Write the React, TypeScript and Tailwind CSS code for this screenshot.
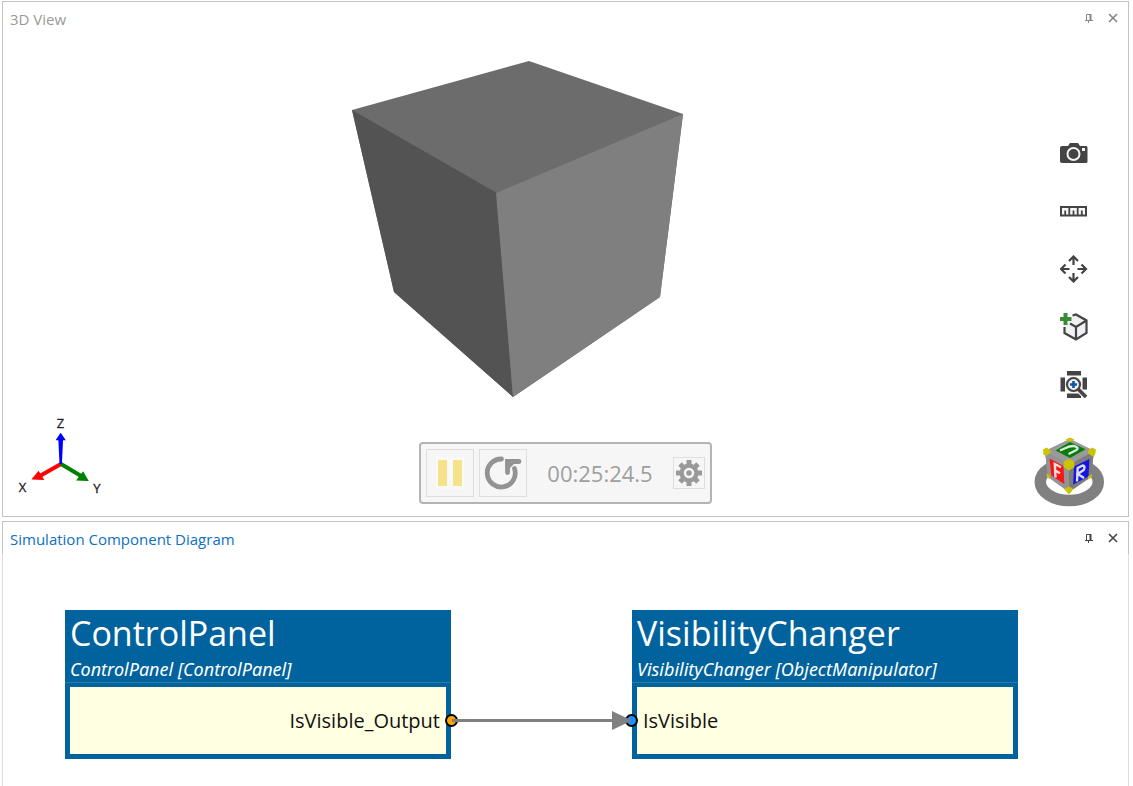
import React from 'react';

const tools = [
  {
    label: 'Take screenshot',
    icon: (
      <svg viewBox="0 0 28 28" className="h-7 w-7">
        <path d="M2 7h6l2-3h8l2 3h6q1.500 0 1.500 1.500v14q0 1.500-1.500 1.500h-24q-2 0-2-2v-13q0-2 2-2z" fill="#444444" />
        <circle cx="13.500" cy="15" r="6" fill="#444444" stroke="#f4f4f4" strokeWidth="2" />
        <rect x="22" y="9" width="3" height="3" fill="#f4f4f4" />
      </svg>
    )
  },
  {
    label: 'Measure',
    icon: (
      <svg viewBox="0 0 28 28" className="h-7 w-7">
        <path d="M1 10h25v8.500H1z" fill="#f6f6f6" stroke="#444444" strokeWidth="2" />
        <path d="M9.300 10v8M17.700 10v8" stroke="#444444" strokeWidth="1.800" />
        <path d="M5.200 18v-4.500M13.500 18v-4.500M21.800 18v-4.500" stroke="#444444" strokeWidth="1.800" />
      </svg>
    )
  },
  {
    label: 'Move',
    icon: (
      <svg viewBox="0 0 28 28" className="h-7 w-7" fill="none" stroke="#444444" strokeWidth="2.200">
        <path d="M13.500 10V2M9 6l4.500-4.500L18 6" />
        <path d="M13.500 18v8M9 22l4.500 4.500L18 22" />
        <path d="M9.500 14h-8M5.500 9.500L1 14l4.500 4.500" />
        <path d="M17.500 14h8M21.500 9.500L26 14l-4.500 4.500" />
      </svg>
    )
  },
  {
    label: 'Add object',
    icon: (
      <svg viewBox="0 0 28 28" className="h-7 w-7">
        <path d="M12 3l4-1.500 10.500 6v13L16 27 4.500 20.500V12l7-5z" fill="#f1f1f3" />
        <path d="M12.500 2.500l3.500-1L26.500 7.500v12.500L16 26.500 4.500 20v-6M10 10.500l6 3.500L26.500 7.500M16 14v12.500" fill="none" stroke="#444444" strokeWidth="2.200" />
        <path d="M3.500 0h4v4h4v4h-4v4h-4V8h-4V4h4z" fill="#388a34" />
      </svg>
    )
  },
  {
    label: 'Zoom to fit',
    icon: (
      <svg viewBox="0 0 28 28" className="h-7 w-7">
        <path d="M7 0h14v4.500H7zM.500 6.500H5v14H.500zM22.500 6.500H27v12h-4.500zM7 22.500h14V27H7z" fill="#444444" />
        <circle cx="13.500" cy="13.500" r="6.500" fill="#f4f4f4" stroke="#f4f4f4" strokeWidth="4" />
        <path d="M17 17l9 9" stroke="#f4f4f4" strokeWidth="6" />
        <path d="M18 18l8 8" stroke="#444444" strokeWidth="3.500" />
        <circle cx="13.500" cy="13.500" r="6.500" fill="#f4f4f4" stroke="#444444" strokeWidth="2.200" />
        <path d="M13.500 10v7M10 13.500h7" stroke="#0a55a5" strokeWidth="2.600" />
      </svg>
    )
  }
];

function PinIcon() {
  return (
    <svg viewBox="0 0 8 9" className="h-[9px] w-2" fill="none" stroke="currentColor">
      <path d="M1.500 6V.500h4V6M0 6.500h8M3.500 6.500V9" />
      <path d="M5.500 0v6" strokeWidth="2" />
    </svg>
  );
}

function CloseIcon() {
  return (
    <svg viewBox="0 0 10 10" className="h-[10px] w-[10px]" fill="none" stroke="currentColor" strokeWidth="1.600">
      <path d="M1 1l8 8M9 1L1 9" />
    </svg>
  );
}

function PanelHeader({ title, active }: { title: string; active?: boolean }) {
  return (
    <header className="flex h-8 items-center justify-between px-[7px]">
      <h2 className={active ? 'pt-[2px] text-[15px] text-[#0e70c0]' : 'pt-[2px] text-[15px] text-[#999999]'}>{title}</h2>
      <div className={active ? 'flex items-center gap-[10px] text-[#444444]' : 'flex items-center gap-[10px] text-[#868686]'}>
        <button type="button" aria-label={`Pin ${title}`} className="flex h-4 w-3 items-center justify-center">
          <PinIcon />
        </button>
        <button type="button" aria-label={`Close ${title}`} className="flex h-4 w-4 items-center justify-center">
          <CloseIcon />
        </button>
      </div>
    </header>
  );
}

function AxisTriad() {
  return (
    <svg viewBox="10 414 100 90" className="h-[90px] w-[100px]">
      <path d="M61 464L38 477" stroke="#ff0000" strokeWidth="4" />
      <path d="M33.500 478.500l5-6 4 6.500z" fill="#ff0000" stroke="#ff0000" strokeWidth="2" />
      <path d="M61 464L82 476.500" stroke="#008000" strokeWidth="4" />
      <path d="M87 480l-9-.500 5-6.500z" fill="#008000" stroke="#008000" strokeWidth="2" />
      <path d="M59.500 464l-1.200-25h4.800l-1.200 25z" fill="#0000ff" />
      <path d="M60.700 434l-3.700 5.500h7.400z" fill="#0000ff" stroke="#0000ff" strokeWidth="1.500" />
      <g className="font-['Open_Sans',sans-serif] text-[13px]" fill="#222222" stroke="#222222" strokeWidth=".300" textAnchor="middle">
        <text x="60.500" y="428">Z</text>
        <text x="22.500" y="492">X</text>
        <text x="97" y="493">Y</text>
      </g>
    </svg>
  );
}

function NavigationCube() {
  return (
    <svg viewBox="1032 434 74 74" className="h-[74px] w-[74px]">
      <ellipse cx="1069.300" cy="482" rx="29" ry="18.500" fill="none" stroke="#808080" strokeWidth="11.500" />
      <path d="M1070 439l24 12-3 26-22 15-21-15-3-26z" fill="#8c8c8c" />
      <path d="M1070 439l24 12-25 14-24-14z" fill="#9a9a9a" />
      <path d="M1045 451l24 14v27l-21-15z" fill="#949494" />
      <path d="M1094 451l-25 14v27l22-15z" fill="#7d7d7d" />
      <path d="M1070 442l15.500 7.300-15.500 8.700-14.500-7.500z" fill="#087d0d" />
      <path d="M1049.500 458.500l14 7.500.800 18-13-8.500z" fill="#f51616" />
      <path d="M1089.500 459l-15.500 7.500-.800 18 15.300-8z" fill="#1515df" />
      <path d="M1060 450.500l9.500-4q6-1.500 8 1.500 .500 1.500-3 3l-6 3" fill="none" stroke="#d9ead9" strokeWidth="2.400" />
      <path d="M1055.500 477.500l-.700-13.500 6.200 3.300M1055.200 470.500l4.800 2.700" fill="none" stroke="#fcdede" strokeWidth="2.400" />
      <path d="M1077 481.500l.700-13.500 5-2.500q3 .500 1 4.500l-6 4 6.300 4" fill="none" stroke="#dcdcfc" strokeWidth="2.400" />
      <g fill="#cbc305">
        <path d="M1070 437.500l4.500 2-4.500 2.500-4.500-2.500z" />
        <path d="M1043 449.500l3.500-2 4 2.500v3l-5 3-2-1.500z" />
        <path d="M1096 449.500l-4-2-4 3v3l5 3 2-1.500z" />
        <path d="M1069 459l5.300 2.800v5.400l-5.300 3.300-5.300-3.300v-5.400z" />
        <path d="M1069 486.500l4.500 2.500-4.500 5.500-5-5.500z" />
        <path d="M1046.500 473l3.500 3v3l-3-1.500z" />
        <path d="M1092 474l-4 2.500v3l3.500-2z" />
      </g>
    </svg>
  );
}

function PlaybackBar() {
  return (
    <div className="flex h-[62px] w-[293px] items-center rounded border-2 border-[#b4b4b4] bg-[#f6f6f6] px-[5px]">
      <button type="button" aria-label="Pause" className="flex h-12 w-12 items-center justify-center border border-[#dedede]">
        <svg viewBox="0 0 28 32" className="h-8 w-7">
          <rect width="28" height="32" fill="#f9f9f9" />
          <path d="M2 3h9v26H2zM17 3h9v26h-9z" fill="#f6e28a" />
        </svg>
      </button>
      <button type="button" aria-label="Reset" className="ml-[5px] flex h-12 w-12 items-center justify-center border border-[#dedede]">
        <svg viewBox="0 0 46 46" className="h-[46px] w-[46px]" fill="none" stroke="#939393" strokeWidth="4.800">
          <path d="M21.500 9A14 14 0 1 0 34.500 18.500" strokeLinecap="round" />
          <path d="M27.500 22.500V11.500H39" strokeLinecap="round" />
          <path d="M28 11v9l9-9z" fill="#939393" stroke="none" />
        </svg>
      </button>
      <time className="flex-1 text-center text-[22px] text-[#9f9f9f]">00:25:24.5</time>
      <button type="button" aria-label="Simulation settings" className="flex h-8 w-8 items-center justify-center border border-[#dedede]">
        <svg viewBox="-14 -14 28 28" className="h-7 w-7">
          <g stroke="#999999" strokeWidth="5">
            <path d="M0-13V13M-13 0H13M-9-9L9 9M-9 9L9-9" />
          </g>
          <circle r="9.500" fill="#999999" />
          <circle r="4" fill="#999999" stroke="#f6f6f6" strokeWidth="2.500" />
        </svg>
      </button>
    </div>
  );
}

function ViewPanel() {
  return (
    <section className="border border-[#c3c3c3]">
      <PanelHeader title="3D View" />
      <div className="grid grid-cols-[1fr_auto_1fr] pt-1">
        <div className="flex items-end pb-3 pl-[7px]">
          <AxisTriad />
        </div>

        <div className="flex flex-col items-center pb-3">
          <svg viewBox="346 38 440 404" className="h-[404px] w-[440px]">
            <path d="M529 61L683 114 660 297 513 397 394 292 352 110z" fill="#6c6c6c" />
            <path d="M352 110L497 193 513 397 394 292z" fill="#535353" />
            <path d="M683 114L660 297 513 397 496 193z" fill="#7f7f7f" />
          </svg>
          <PlaybackBar />
        </div>

        <div className="flex flex-col items-end justify-between pt-[101px] pb-2">
          <div className="flex flex-col gap-[30px] pr-10">
            {tools.map(tool => (
              <button key={tool.label} type="button" aria-label={tool.label} className="h-7 w-7">
                {tool.icon}
              </button>
            ))}
          </div>
          <div className="pr-[22px]">
            <NavigationCube />
          </div>
        </div>
      </div>
    </section>
  );
}

interface NodeProps {
  name: string;
  type: string;
  port: string;
  output?: boolean;
}

function DiagramNode({ name, type, port, output }: NodeProps) {
  return (
    <article className="relative w-[386px] shrink-0 bg-[#00639e] text-white">
      <div className="h-[73px] border-b border-[#2b7cae] px-[5px]">
        <h3 className="text-[34px] leading-[47px]">{name}</h3>
        <p className="font-['Noto_Sans',sans-serif] text-[18px] leading-6 italic">{type}</p>
      </div>
      <div className="border-x-[5px] border-t-4 border-b-[5px] border-[#00639e] bg-[#ffffe1]">
        <div className={output ? 'flex h-[67px] items-center justify-end px-[6px]' : 'flex h-[67px] items-center px-[6px]'}>
          <span className="text-[20px] text-[#111111]">{port}</span>
        </div>
      </div>
      <span
        className={
          output
            ? 'absolute -right-[7px] bottom-8 h-[13px] w-[13px] rounded-full border-2 border-black bg-[#ffa500]'
            : 'absolute bottom-8 -left-[7px] h-[13px] w-[13px] rounded-full border-2 border-black bg-[#1e90ff]'
        }
      />
    </article>
  );
}

function DiagramPanel() {
  return (
    <section className="flex flex-1 flex-col border-t border-[#c3c3c3]">
      <div className="border-x border-[#c3c3c3]">
        <PanelHeader title="Simulation Component Diagram" active />
      </div>
      <div className="flex flex-1 items-start overflow-hidden border-x border-[#dedede] pt-14 pb-6 pl-[62px]">
        <DiagramNode name="ControlPanel" type="ControlPanel [ControlPanel]" port="IsVisible_Output" output />
        <svg viewBox="0 0 181 149" className="z-10 h-[149px] w-[181px] shrink-0 overflow-visible">
          <path d="M1 110.500h162" stroke="#808080" strokeWidth="3" />
          <path d="M161 101v19l20-9.500z" fill="#808080" />
        </svg>
        <DiagramNode name="VisibilityChanger" type="VisibilityChanger [ObjectManipulator]" port="IsVisible" />
      </div>
    </section>
  );
}

export default function App() {
  return (
    <main className="flex min-h-screen flex-col gap-1 bg-white pt-px pr-1 pl-[2px] font-['Open_Sans',sans-serif]">
      <ViewPanel />
      <DiagramPanel />
    </main>
  );
}
